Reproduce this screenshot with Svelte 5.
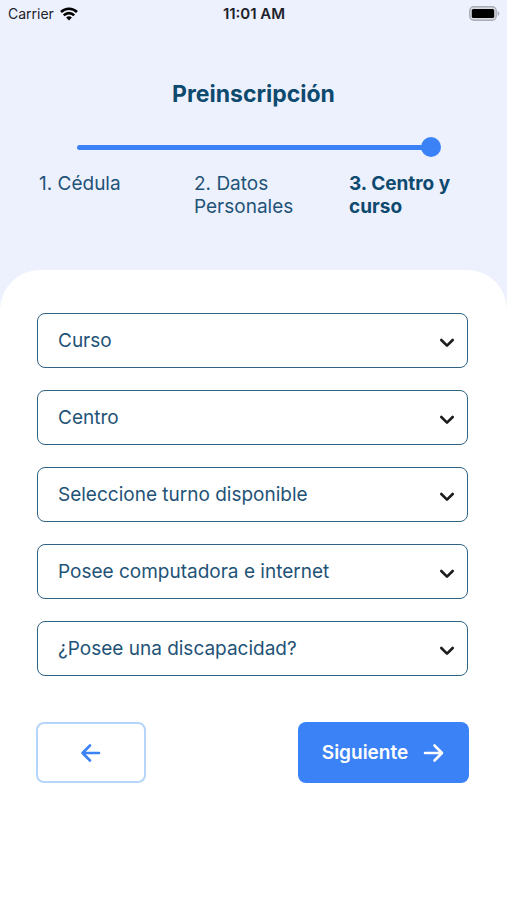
<script lang="ts">
    const steps = ["1. Cédula", "2. Datos Personales", "3. Centro y curso"];
    const current = 2;

    let fields = $state([
        { id: "curso", label: "Curso", value: "", options: ["Informática", "Inglés"] },
        { id: "centro", label: "Centro", value: "", options: ["Centro Norte", "Centro Sur"] },
        { id: "turno", label: "Seleccione turno disponible", value: "", options: ["Mañana", "Tarde", "Noche"] },
        { id: "equipo", label: "Posee computadora e internet", value: "", options: ["Sí", "No"] },
        { id: "discapacidad", label: "¿Posee una discapacidad?", value: "", options: ["Sí", "No"] }
    ]);

    const onSubmit = (e: SubmitEvent) => {
        e.preventDefault();
    };
</script>

<div class="screen">
    <div class="status">
        <div class="carrier">
            <span>Carrier</span>
            <svg width="18" height="14" viewBox="0 0 18 14" fill="none" stroke="#000" stroke-width="2.6">
                <path d="M1 5a11.4 11.4 0 0 1 16 0" />
                <path d="M3.8 8.3a7.4 7.4 0 0 1 10.4 0" />
                <path d="M9 13.6l-2.9-3a4.1 4.1 0 0 1 5.800 0z" fill="#000" stroke="none" />
            </svg>
        </div>
        <span class="time">11:01 AM</span>
        <svg class="battery" width="31" height="15" viewBox="0 0 31 15">
            <rect x="0.8" y="0.8" width="26.4" height="13.4" rx="4" fill="#d9dbe3" stroke="#aaadb5" stroke-width="1.4" />
            <rect x="2.8" y="3" width="22.4" height="9" rx="1.6" fill="#000" />
            <path d="M28.600 5v5c2.400-.8 2.400-4.200 0-5z" fill="#aaadb5" />
        </svg>
    </div>

    <header>
        <h1>Preinscripción</h1>
        <div class="track" role="progressbar" aria-label="Paso" aria-valuemin="1" aria-valuemax="3" aria-valuenow={current + 1}>
            <div class="line"></div>
            <div class="dot"></div>
        </div>
        <ol>
            {#each steps as step, i}
                <li class:active={i === current}>{step}</li>
            {/each}
        </ol>
    </header>

    <form onsubmit={onSubmit}>
        {#each fields as field}
            <div class="field">
                <select id={field.id} aria-label={field.label} bind:value={field.value}>
                    <option value="">{field.label}</option>
                    {#each field.options as option}
                        <option value={option}>{option}</option>
                    {/each}
                </select>
                <svg width="16" height="10" viewBox="0 0 16 10" fill="none" stroke="#1c1c1e" stroke-width="2.6" stroke-linecap="round" stroke-linejoin="round">
                    <path d="M2.300 2L8 7.700 13.700 2" />
                </svg>
            </div>
        {/each}

        <div class="actions">
            <button type="button" class="back" aria-label="Atrás">
                <svg width="22" height="20" viewBox="0 0 22 20" fill="none" stroke="currentColor" stroke-width="2.6" stroke-linecap="round" stroke-linejoin="round">
                    <path d="M19 10H2.500M10 2.500L2.500 10l7.500 7.500" />
                </svg>
            </button>
            <button type="submit" class="next">
                Siguiente
                <svg width="22" height="20" viewBox="0 0 22 20" fill="none" stroke="currentColor" stroke-width="2.6" stroke-linecap="round" stroke-linejoin="round">
                    <path d="M2 10h17M11.500 2.500L19 10l-7.500 7.500" />
                </svg>
            </button>
        </div>
    </form>
</div>

<style>
    :global(body) {
        margin: 0;
        background: #fff;
    }
    .screen {
        min-height: 100vh;
        display: flex;
        flex-direction: column;
        background: #edf1fe;
        font-family: Inter, "Liberation Sans", sans-serif;
        color: #1f5377;
    }
    .status {
        display: grid;
        grid-template-columns: 1fr auto 1fr;
        align-items: center;
        height: 27px;
        padding: 0 7px 0 8px;
        font-size: 14px;
        color: #20222a;
    }
    .carrier {
        display: flex;
        align-items: center;
        gap: 6px;
    }
    .time {
        font-size: 15px;
        font-weight: 600;
    }
    .battery {
        justify-self: end;
    }
    header {
        padding: 52px 39px;
    }
    h1 {
        margin: 0;
        font-size: 23px;
        line-height: 30px;
        font-weight: 700;
        text-align: center;
        color: #0d4a6e;
    }
    .track {
        display: flex;
        align-items: center;
        height: 20px;
        margin: 28px 27px 0 38px;
    }
    .line {
        flex: 1;
        height: 5px;
        margin-right: -4px;
        border-radius: 3px 0 0 3px;
        background: #3b82f6;
    }
    .dot {
        width: 20px;
        height: 20px;
        border-radius: 50%;
        background: #3b82f6;
    }
    ol {
        display: grid;
        grid-template-columns: repeat(3, 1fr);
        gap: 36px;
        margin: 15px 0 0;
        padding: 0;
        list-style: none;
        font-size: 19px;
        line-height: 23px;
    }
    .active {
        font-weight: 700;
        color: #0d4a6e;
    }
    form {
        flex: 1;
        display: flex;
        flex-direction: column;
        gap: 22px;
        padding: 43px 39px 42px 37px;
        border-radius: 40px 40px 0 0;
        background: #fff;
    }
    .field {
        display: grid;
        align-items: center;
    }
    .field > * {
        grid-area: 1 / 1;
    }
    .field svg {
        justify-self: end;
        margin: 5px 13px 0 0;
        pointer-events: none;
    }
    select {
        appearance: none;
        width: 100%;
        height: 55px;
        padding: 0 40px 0 20px;
        border: 1px solid #2f6485;
        border-radius: 8px;
        background: #fff;
        color: inherit;
        font-family: inherit;
        font-size: 19px;
    }
    .actions {
        display: flex;
        justify-content: space-between;
        margin: 24px -1px 0;
    }
    button {
        display: flex;
        align-items: center;
        justify-content: center;
        gap: 15px;
        height: 61px;
        border-radius: 8px;
        font-family: inherit;
        font-size: 19px;
        font-weight: 600;
        cursor: pointer;
    }
    .back {
        width: 110px;
        border: 2px solid #b5d5fb;
        background: #fff;
        color: #3b82f6;
    }
    .next {
        width: 171px;
        border: none;
        background: #3b82f6;
        color: #fff;
    }
</style>
